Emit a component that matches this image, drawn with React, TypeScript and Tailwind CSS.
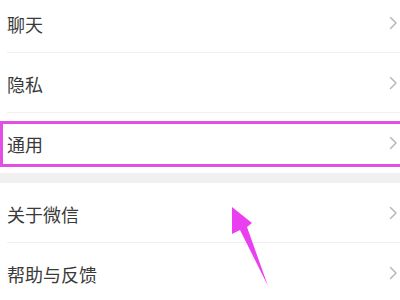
import React from "react";

type Row = { label: string; marked?: boolean };

const topGroup: Row[] = [{ label: "聊天" }, { label: "隐私" }, { label: "通用", marked: true }];
const bottomGroup: Row[] = [{ label: "关于微信" }, { label: "帮助与反馈" }];

function Chevron() {
  return (
    <svg width="9" height="14" viewBox="0 0 9 14" className="shrink-0">
      <path d="M1.5 1.5 L7 7 L1.5 12.5" fill="none" stroke="#b8b8b8" strokeWidth="1.5" strokeLinecap="round" strokeLinejoin="round" />
    </svg>
  );
}

function SettingRow({ row, last }: { row: Row; last?: boolean }) {
  return (
    <div className="relative pl-[7px]">
      <div className={`flex h-[60px] items-center justify-between pr-[2px] ${last ? "" : "border-b border-[#efefef]"}`}>
        <span className="text-[18px] leading-none text-[#3a3a3a] pt-[2px]">{row.label}</span>
        <Chevron />
      </div>
      {row.marked && (
        <div className="pointer-events-none absolute left-0 right-[-20px] top-[8px] h-[46px] border-[3px] border-[#e34fe3]" />
      )}
    </div>
  );
}

export default function App() {
  return (
    <div
      className="relative h-[300px] w-[400px] overflow-hidden bg-white"
      style={{ fontFamily: '"Noto Sans CJK SC", "Noto Sans", sans-serif' }}
    >
      <div className="mt-[-7px]">
        {topGroup.map((r, i) => (
          <SettingRow key={r.label} row={r} last={i === topGroup.length - 1} />
        ))}
      </div>
      <div className="h-[10px] bg-[#f0f0f0]" />
      <div>
        {bottomGroup.map((r) => (
          <SettingRow key={r.label} row={r} />
        ))}
      </div>

      <svg className="pointer-events-none absolute left-0 top-0" width="400" height="300" viewBox="0 0 400 300">
        <polygon points="232,207 252,223 247,227 268,286 240,230 232,234" fill="#ea3ff0" />
      </svg>
    </div>
  );
}
